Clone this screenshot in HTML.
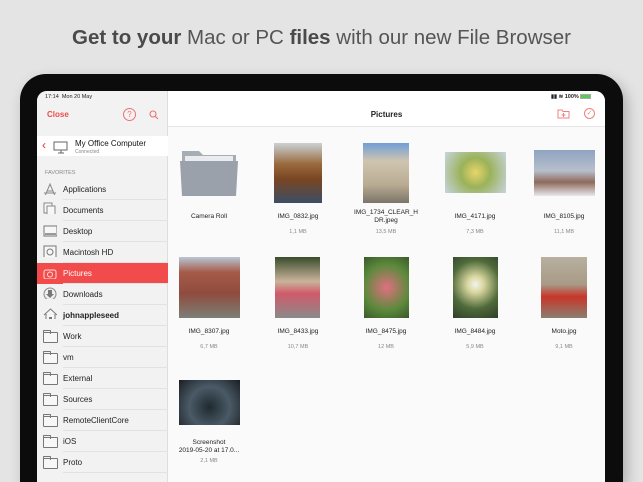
<!DOCTYPE html>
<html><head><meta charset="utf-8"><style>
*{margin:0;padding:0;box-sizing:border-box}
html,body{width:643px;height:482px;overflow:hidden}
body{background:#e4e4e4;font-family:"Liberation Sans",sans-serif;position:relative}
.a{position:absolute}
.hd{top:26px;left:0;width:643px;text-align:center;font-size:20.5px;color:#555;letter-spacing:0}
.hd b{color:#4a4a4a}
.frame{left:20px;top:74px;width:603px;height:408px;background:#0c0c0c;border-radius:26px 26px 0 0;box-shadow:4px 6px 14px rgba(0,0,0,.25)}
.screen{left:37px;top:91px;width:568px;height:391px;background:#fafafa;border-radius:10px 10px 0 0;overflow:hidden}
.side{left:0;top:0;width:131px;height:400px;background:#f2f2f3;border-right:1px solid #ddd}
.row{position:absolute;left:0;width:131px;height:21px;font-size:8px;color:#222;line-height:21px;padding-left:26px}
.row:after{content:"";position:absolute;left:26px;right:0;bottom:0;height:1px;background:#e2e2e2}
.ic{position:absolute;left:6px;top:4px;width:14px;height:12px}
.fold{border:1px solid #777;border-radius:1px;background:#f7f7f7;top:6px;height:11px;width:15px}
.fold:before{content:"";position:absolute;left:-1px;top:-3px;width:6px;height:3px;border:1px solid #777;border-bottom:none;border-radius:1px 1px 0 0}
.lbl{position:absolute;font-size:6.5px;color:#222;text-align:center;width:90px;line-height:7.5px}
.sz{position:absolute;font-size:5.5px;color:#888;text-align:center;width:90px}
.ph{position:absolute}
</style></head><body>
<div class="a hd"><b>Get to your</b> Mac or PC <b>files</b> with our new File Browser</div>
<div class="a frame"></div>
<div class="a screen">
 <div class="a side">
  <div class="a" style="left:8px;top:3px;font-size:5.5px;color:#222">17:14&nbsp; Mon 20 May</div>
  <div class="a" style="left:10px;top:19px;font-size:8px;color:#f04a4a;font-weight:bold">Close</div>
  <div class="a" style="left:86px;top:17px;width:13px;height:13px;border:1px solid #f07070;border-radius:50%;font-size:8px;color:#f07070;text-align:center;line-height:11px">?</div>
  <svg class="a" style="left:112px;top:19px" width="10" height="10"><circle cx="4" cy="4" r="3" fill="none" stroke="#f07070" stroke-width="1.1"/><path d="M6 6l3 3" stroke="#f07070" stroke-width="1.1"/></svg>
  <div class="a" style="left:0;top:45px;width:131px;height:20px;background:#fff"></div>
  <div class="a" style="left:5px;top:47px;font-size:12px;color:#e03030">‹</div>
  <svg class="a" style="left:16px;top:50px" width="16" height="13"><rect x="1" y="1" width="13" height="8" fill="#fff" stroke="#666"/><path d="M5 12h6M8 9v3" stroke="#666"/></svg>
  <div class="a" style="left:38px;top:48px;font-size:8px;color:#111">My Office Computer</div>
  <div class="a" style="left:38px;top:58px;font-size:5px;color:#888">Connected</div>
  <div class="a" style="left:8px;top:79px;font-size:5.5px;color:#888">FAVORITES</div>
  <div class="row" style="top:88px"><svg class="ic" width="14" height="14"><path d="M2 13L7 1l5 12M4 8h6M1 10h12" stroke="#888" fill="none"/></svg>Applications</div>
  <div class="row" style="top:109px"><svg class="ic" style="top:2px" width="14" height="16"><rect x="1" y="1" width="8" height="10" fill="#f7f7f7" stroke="#888"/><rect x="4" y="4" width="8" height="11" fill="#f7f7f7" stroke="#888"/></svg>Documents</div>
  <div class="row" style="top:130px"><svg class="ic" width="15" height="13"><rect x="1" y="1" width="13" height="10" fill="#f7f7f7" stroke="#777"/><rect x="2" y="8" width="11" height="2" fill="#999"/></svg>Desktop</div>
  <div class="row" style="top:151px"><svg class="ic" style="top:3px" width="14" height="15"><rect x="1" y="1" width="12" height="13" fill="#f7f7f7" stroke="#777"/><circle cx="7" cy="7" r="3" fill="none" stroke="#777"/></svg>Macintosh HD</div>
  <div class="row" style="top:172px;background:#f24b4b;color:#fff"><svg class="ic" width="14" height="13"><rect x="1" y="3" width="12" height="9" rx="2" fill="none" stroke="#fdd"/><circle cx="7" cy="7.5" r="2.5" fill="none" stroke="#fdd"/></svg>Pictures</div>
  <div class="row" style="top:193px"><svg class="ic" style="top:3px" width="15" height="15"><circle cx="7" cy="7" r="6" fill="#eee" stroke="#888"/><path d="M5 3h4v4h2l-4 4-4-4h2z" fill="#777"/></svg>Downloads</div>
  <div class="row" style="top:214px;font-weight:bold"><svg class="ic" style="top:2px" width="15" height="15"><path d="M1 8L7.5 2 14 8M3 7v7h9V7" fill="#f7f7f7" stroke="#777"/><rect x="6" y="10" width="3" height="4" fill="#777"/></svg>johnappleseed</div>
  <div class="row" style="top:235px"><div class="ic fold"></div>Work</div>
  <div class="row" style="top:256px"><div class="ic fold"></div>vm</div>
  <div class="row" style="top:277px"><div class="ic fold"></div>External</div>
  <div class="row" style="top:298px"><div class="ic fold"></div>Sources</div>
  <div class="row" style="top:319px"><div class="ic fold"></div>RemoteClientCore</div>
  <div class="row" style="top:340px"><div class="ic fold"></div>iOS</div>
  <div class="row" style="top:361px"><div class="ic fold"></div>Proto</div>
 </div>
 <div class="a" style="left:131px;top:0;width:437px;height:36px;background:#fff;border-bottom:1px solid #e6e6e6"></div>
 <div class="a" style="left:514px;top:3px;font-size:5.5px;color:#222;font-weight:bold">▮▮ ≋ 100% <span style="display:inline-block;width:11px;height:5px;background:#5c5;border:1px solid #aaa;vertical-align:middle"></span></div>
 <div class="a" style="left:131px;top:19px;width:437px;text-align:center;font-size:8px;font-weight:bold;color:#222">Pictures</div>
 <svg class="a" style="left:520px;top:17px" width="13" height="11"><path d="M1 2h4l1 1.5h6V10H1z" fill="none" stroke="#f08080"/><path d="M6.5 5v4M4.5 7h4" stroke="#f08080"/></svg>
 <div class="a" style="left:547px;top:17px;width:11px;height:11px;border:1px solid #f08080;border-radius:50%;font-size:7px;color:#f08080;text-align:center;line-height:9px">✓</div>
</div>
<svg class="a" style="left:180px;top:148px" width="58" height="50"><path d="M2 3h17l4 4h33v40H2z" fill="#a7adb5"/><rect x="5" y="8" width="48" height="5" fill="#e9ebee"/><path d="M0 13h58l-2 35H2z" fill="#9aa1aa"/></svg>
<div class="ph" style="left:274px;top:143px;width:48px;height:60px;background:linear-gradient(180deg,#c9d2d6 0%,#9a6a3e 35%,#7a4522 60%,#3b4e66 100%)"></div>
<div class="ph" style="left:363px;top:143px;width:46px;height:60px;background:linear-gradient(180deg,#6f9ed6 0%,#cfc5b0 30%,#b9ab92 70%,#7b7468 100%)"></div>
<div class="ph" style="left:445px;top:152px;width:61px;height:41px;background:radial-gradient(circle at 50% 50%,#e8d56a 0%,#9bb25a 40%,#c7d4df 100%)"></div>
<div class="ph" style="left:534px;top:150px;width:61px;height:46px;background:linear-gradient(180deg,#8fa3c0 0%,#b7bfcc 45%,#8e6a5c 70%,#e8e8ec 100%)"></div>
<div class="ph" style="left:179px;top:257px;width:61px;height:61px;background:linear-gradient(180deg,#b8c6d6 0%,#a65a48 25%,#8f4c3e 60%,#7d7f76 100%)"></div>
<div class="ph" style="left:275px;top:257px;width:45px;height:61px;background:linear-gradient(180deg,#394c2c 0%,#c9b39a 40%,#d05a6a 60%,#8a8a8a 100%)"></div>
<div class="ph" style="left:364px;top:257px;width:45px;height:61px;background:radial-gradient(circle at 50% 50%,#e07080 0%,#5c8a3c 60%,#3a5a2a 100%)"></div>
<div class="ph" style="left:453px;top:257px;width:45px;height:61px;background:radial-gradient(circle at 50% 45%,#f4f4ee 0%,#d9d7a0 20%,#4f6a3a 60%,#2f3f2a 100%)"></div>
<div class="ph" style="left:541px;top:257px;width:46px;height:61px;background:linear-gradient(180deg,#b8b0a0 0%,#a89a86 45%,#c8362a 65%,#8a7f70 100%)"></div>
<div class="ph" style="left:179px;top:380px;width:61px;height:45px;background:radial-gradient(circle at 50% 60%,#1f2a30 0%,#4a5a66 50%,#1a1e22 100%)"></div>
<div class="lbl" style="left:164px;top:213px">Camera Roll</div>
<div class="lbl" style="left:253px;top:213px">IMG_0832.jpg</div><div class="sz" style="left:253px;top:229px">1,1 MB</div>
<div class="lbl" style="left:341px;top:209px">IMG_1734_CLEAR_H<br>DR.jpeg</div><div class="sz" style="left:341px;top:229px">13,5 MB</div>
<div class="lbl" style="left:430px;top:213px">IMG_4171.jpg</div><div class="sz" style="left:430px;top:229px">7,3 MB</div>
<div class="lbl" style="left:519px;top:213px">IMG_8105.jpg</div><div class="sz" style="left:519px;top:229px">11,1 MB</div>
<div class="lbl" style="left:164px;top:328px">IMG_8307.jpg</div><div class="sz" style="left:164px;top:344px">6,7 MB</div>
<div class="lbl" style="left:253px;top:328px">IMG_8433.jpg</div><div class="sz" style="left:253px;top:344px">10,7 MB</div>
<div class="lbl" style="left:341px;top:328px">IMG_8475.jpg</div><div class="sz" style="left:341px;top:344px">12 MB</div>
<div class="lbl" style="left:430px;top:328px">IMG_8484.jpg</div><div class="sz" style="left:430px;top:344px">5,9 MB</div>
<div class="lbl" style="left:519px;top:328px">Moto.jpg</div><div class="sz" style="left:519px;top:344px">9,1 MB</div>
<div class="lbl" style="left:164px;top:439px">Screenshot<br>2019-05-20 at 17.0...</div><div class="sz" style="left:164px;top:458px">2,1 MB</div>
</body></html>
